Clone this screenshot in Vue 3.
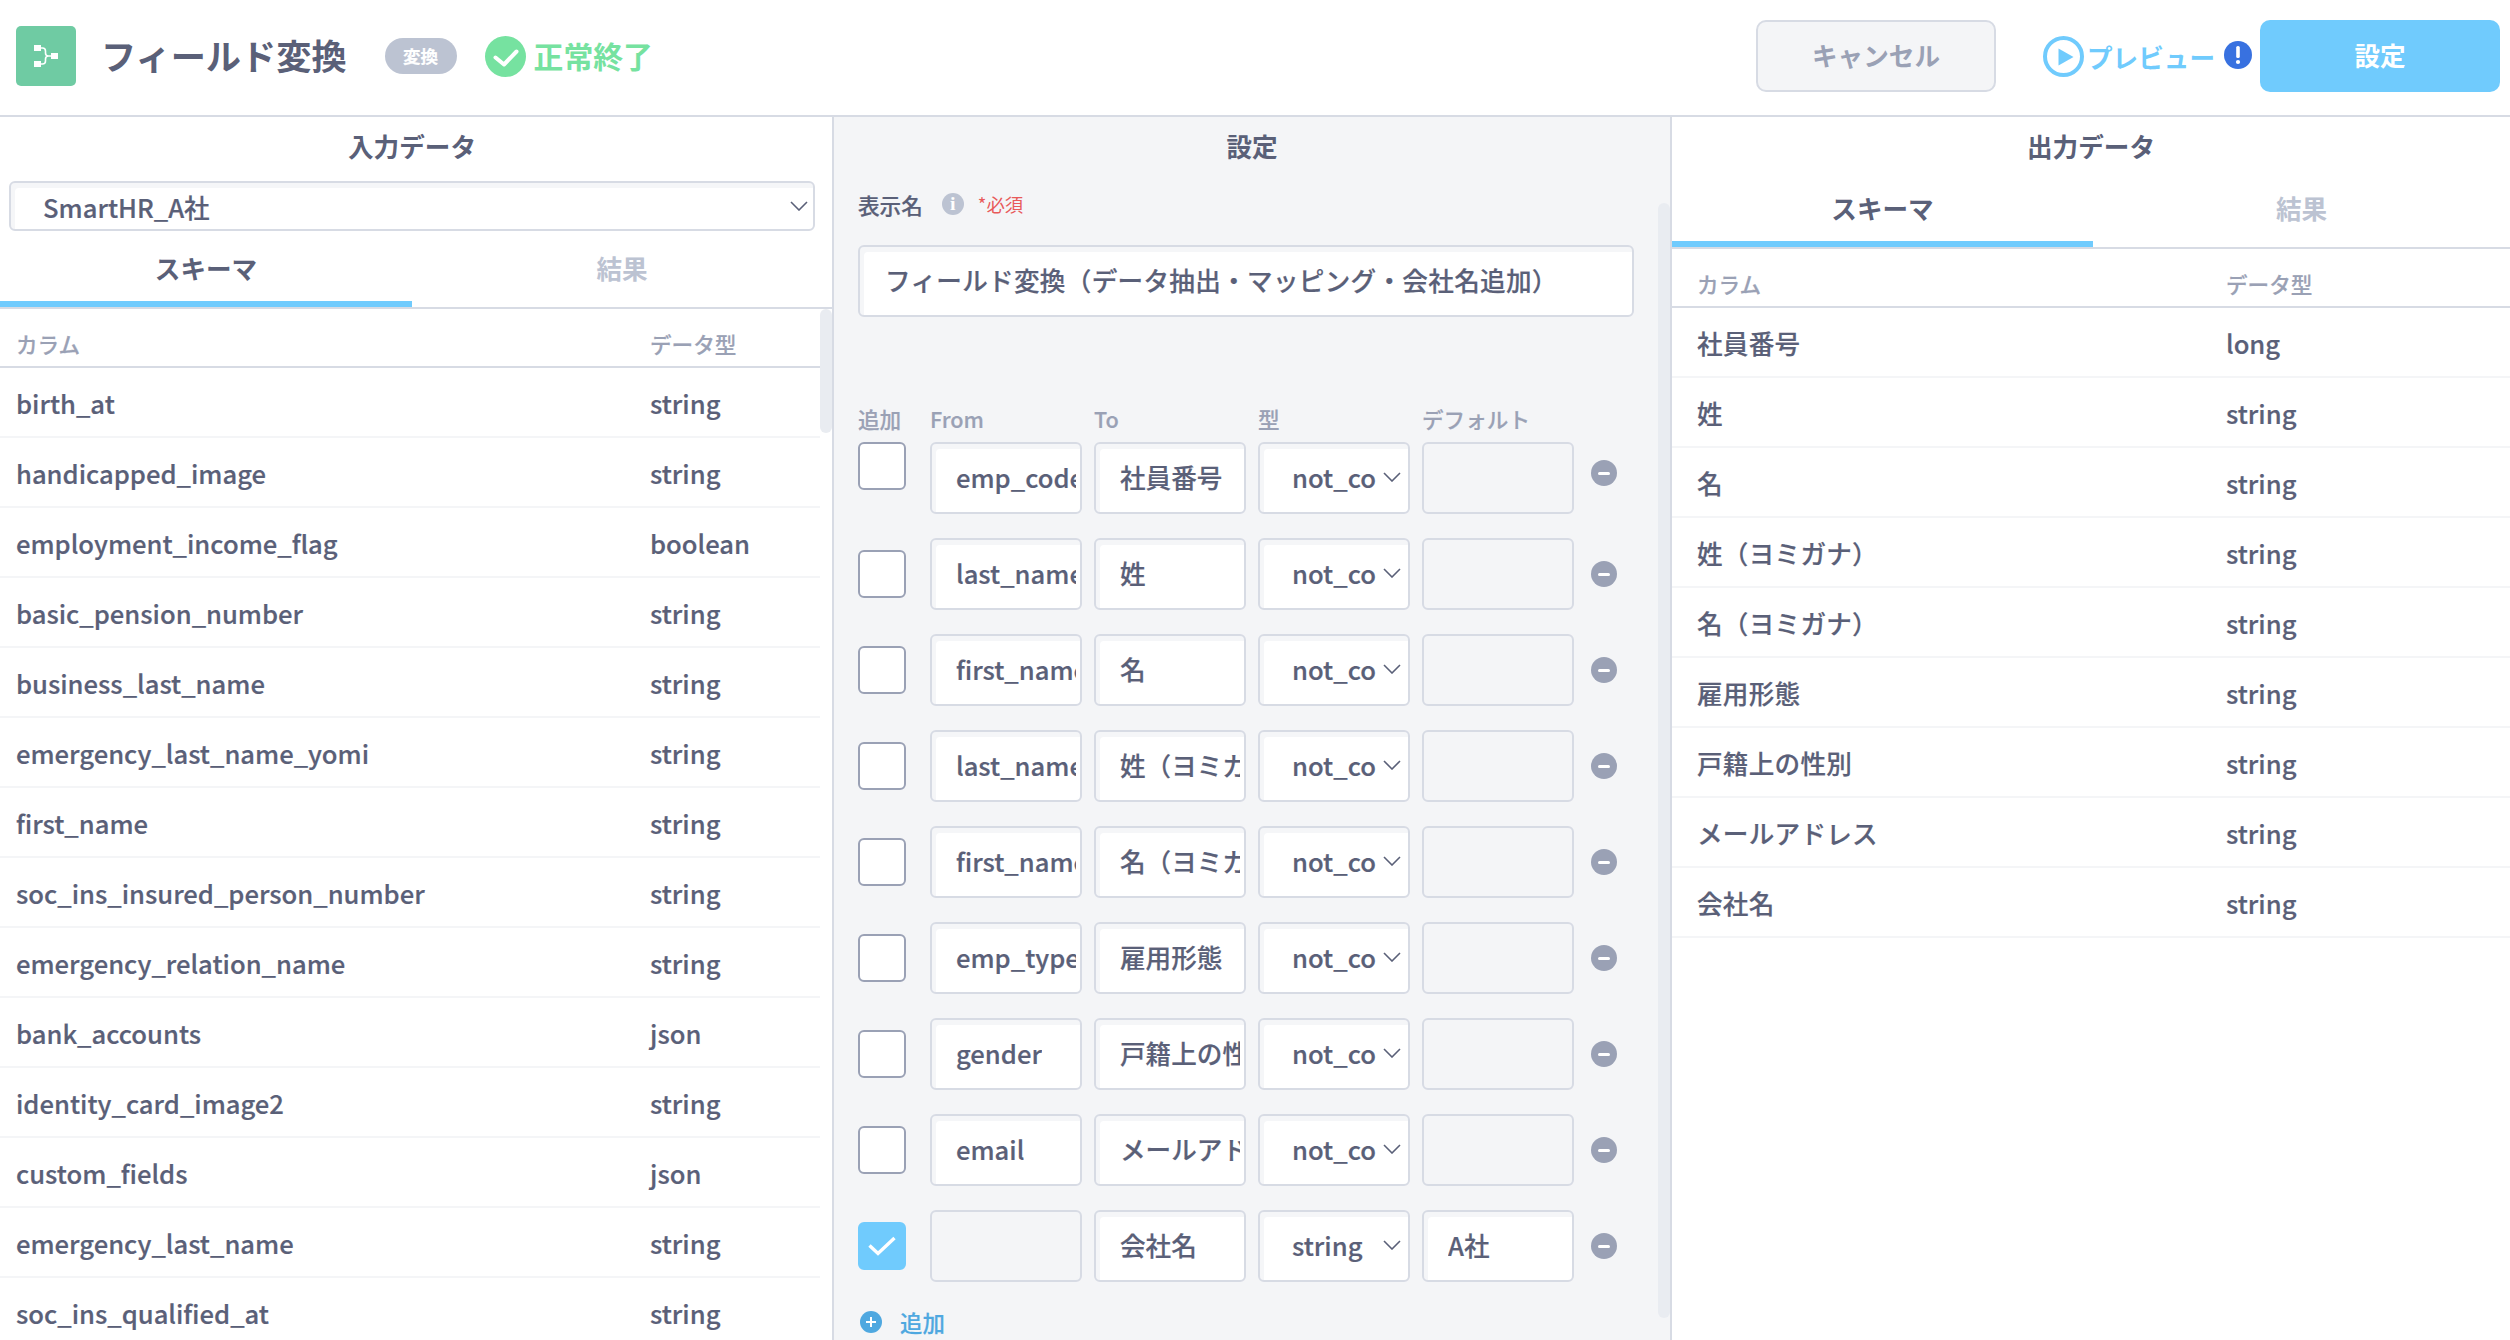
<script setup>
const leftRows = [
  ['birth_at', 'string'], ['handicapped_image', 'string'], ['employment_income_flag', 'boolean'],
  ['basic_pension_number', 'string'], ['business_last_name', 'string'], ['emergency_last_name_yomi', 'string'],
  ['first_name', 'string'], ['soc_ins_insured_person_number', 'string'], ['emergency_relation_name', 'string'],
  ['bank_accounts', 'json'], ['identity_card_image2', 'string'], ['custom_fields', 'json'],
  ['emergency_last_name', 'string'], ['soc_ins_qualified_at', 'string']
]
const rightRows = [
  ['社員番号', 'long'], ['姓', 'string'], ['名', 'string'], ['姓（ヨミガナ）', 'string'], ['名（ヨミガナ）', 'string'],
  ['雇用形態', 'string'], ['戸籍上の性別', 'string'], ['メールアドレス', 'string'], ['会社名', 'string']
]
const mappings = [
  { from: 'emp_code', to: '社員番号', type: 'not_co' },
  { from: 'last_name', to: '姓', type: 'not_co' },
  { from: 'first_name', to: '名', type: 'not_co' },
  { from: 'last_name_yomi', to: '姓（ヨミガナ）', type: 'not_co' },
  { from: 'first_name_yomi', to: '名（ヨミガナ）', type: 'not_co' },
  { from: 'emp_type', to: '雇用形態', type: 'not_co' },
  { from: 'gender', to: '戸籍上の性別', type: 'not_co' },
  { from: 'email', to: 'メールアドレス', type: 'not_co' },
  { from: '', to: '会社名', type: 'string', def: 'A社', checked: true }
]
</script>

<template>
  <div class="page">
    <header class="top">
      <div class="logo">
        <svg width="60" height="60" viewBox="0 0 60 60">
          <rect x="18" y="19" width="7" height="6" fill="#fff" />
          <rect x="18" y="35" width="7" height="6" fill="#fff" />
          <rect x="35" y="27" width="7" height="6" fill="#fff" />
          <path d="M25 22h1.5q3 0 3 3v2q0 3 3 3H35M25 38h1.5q3 0 3-3v-2q0-3 3-3" fill="none" stroke="#fff" stroke-width="1.6" />
        </svg>
      </div>
      <h1 class="title">フィールド変換</h1>
      <span class="badge">変換</span>
      <svg class="status-icon" width="41" height="41" viewBox="0 0 41 41">
        <circle cx="20.5" cy="20.5" r="20.5" fill="#76e2a0" />
        <path d="M10.5 21.5l8.5 7 12.5-13" fill="none" stroke="#fff" stroke-width="4" stroke-linecap="round" stroke-linejoin="round" />
      </svg>
      <span class="status-text">正常終了</span>
      <div class="spacer"></div>
      <button class="btn cancel">キャンセル</button>
      <svg class="play" width="41" height="41" viewBox="0 0 41 41">
        <circle cx="20.5" cy="20.5" r="18.5" fill="none" stroke="#70cbfd" stroke-width="4" />
        <path d="M15.5 12.5l15 8.5-15 8.5z" fill="#70cbfd" />
      </svg>
      <span class="preview">プレビュー</span>
      <svg class="alert" width="28" height="28" viewBox="0 0 28 28">
        <circle cx="14" cy="14" r="14" fill="#3871e0" />
        <rect x="12.2" y="5" width="3.6" height="12" rx="1.6" fill="#fff" />
        <circle cx="14" cy="21" r="2.1" fill="#fff" />
      </svg>
      <button class="btn primary">設定</button>
    </header>

    <main class="columns">
      <section class="panel left">
        <div class="panel-title left-title">入力データ</div>
        <div class="select-wrap">
          <div class="select-box">
            <span>SmartHR_A社</span>
            <svg class="chev big" viewBox="0 0 18 10"><path d="M1 1l8 8 8-8" /></svg>
          </div>
        </div>
        <div class="tabs left-tabs">
          <div class="tab active">スキーマ</div>
          <div class="tab">結果</div>
        </div>
        <div class="table narrow">
          <div class="thead"><span class="c1">カラム</span><span class="c2 left-c2">データ型</span></div>
          <div v-for="r in leftRows" :key="r[0]" class="tr"><span class="c1">{{ r[0] }}</span><span class="c2 left-c2">{{ r[1] }}</span></div>
        </div>
        <div class="scroll left-scroll"></div>
      </section>

      <section class="panel middle">
        <div class="panel-title">設定</div>
        <div class="label-row">
          <span class="label">表示名</span>
          <span class="info">i</span>
          <span class="req">*必須</span>
        </div>
        <div class="name-input field"><span class="field-text">フィールド変換（データ抽出・マッピング・会社名追加）</span></div>

        <div class="map-head">
          <span class="h-add">追加</span>
          <span class="h-col">From</span>
          <span class="h-col">To</span>
          <span class="h-col">型</span>
          <span class="h-col">デフォルト</span>
        </div>
        <div v-for="(m, i) in mappings" :key="i" class="map-row" :class="{ first: i === 0 }">
          <span class="check" :class="{ on: m.checked }">
            <svg v-if="m.checked" width="28" height="20" viewBox="0 0 28 20"><path d="M1.5 9.5L10 17.5 26.5 2" fill="none" stroke="#fff" stroke-width="3.4" /></svg>
          </span>
          <div class="field cell" :class="{ empty: !m.from }"><span class="field-text">{{ m.from }}</span></div>
          <div class="field cell"><span class="field-text">{{ m.to }}</span></div>
          <div class="field cell type">
            <span>{{ m.type }}</span>
            <svg class="chev" viewBox="0 0 18 10"><path d="M1 1l8 8 8-8" /></svg>
          </div>
          <div class="field cell" :class="{ empty: !m.def }"><span class="field-text">{{ m.def }}</span></div>
          <span class="minus"></span>
        </div>
        <div class="add">
          <span class="plus"></span>
          <span>追加</span>
        </div>
        <div class="scroll mid-scroll"></div>
      </section>

      <section class="panel right">
        <div class="panel-title">出力データ</div>
        <div class="tabs right-tabs">
          <div class="tab active">スキーマ</div>
          <div class="tab">結果</div>
        </div>
        <div class="table">
          <div class="thead rhead"><span class="c1 rc1">カラム</span><span class="c2">データ型</span></div>
          <div v-for="r in rightRows" :key="r[0]" class="tr"><span class="c1 rc1 wide">{{ r[0] }}</span><span class="c2">{{ r[1] }}</span></div>
        </div>
      </section>
    </main>
  </div>
</template>

<style>
html, body { margin: 0; background: #fff; }
</style>

<style scoped>
.page {
  width: 2510px;
  height: 1340px;
  overflow: hidden;
  font-family: "Noto Sans CJK JP", "Noto Sans", sans-serif;
  color: #5a6078;
  font-size: 25.6px;
  font-weight: 500;
  -webkit-text-stroke: 0.2px currentColor;
  background: #fff;
}
.top {
  height: 112px;
  padding: 0 10px 3px 16px;
  display: flex;
  align-items: center;
  border-bottom: 2px solid #d7dbe4;
}
.logo {
  width: 60px;
  height: 60px;
  background: #6fcba3;
  border-radius: 5px;
  flex: none;
}
.logo svg { display: block; }
.title {
  margin: 0 0 2px 25px;
  font-size: 35.2px;
  font-weight: 700;
  -webkit-text-stroke: 0;
  color: #5a6078;
  line-height: 1.2;
}
.badge {
  margin-left: 38px;
  width: 72px;
  height: 36px;
  line-height: 36px;
  text-align: center;
  border-radius: 18px;
  background: #bcc3d2;
  color: #fff;
  font-size: 17.6px;
  font-weight: 700;
}
.status-icon { margin-left: 28px; flex: none; }
.status-text {
  margin: 0 0 2px 8px;
  font-size: 29.8px;
  font-weight: 700;
  -webkit-text-stroke: 0;
  color: #76e2a0;
}
.spacer { flex: 1; }
.btn {
  height: 72px;
  font: inherit;
  font-weight: 700;
  -webkit-text-stroke: 0;
  border-radius: 10px;
  padding: 0 0 3px;
  text-align: center;
}
.cancel {
  width: 240px;
  background: #f4f5f7;
  border: 2px solid #d7dbe4;
  color: #9aa1b5;
}
.play { margin-left: 47px; flex: none; }
.preview {
  margin-left: 3px;
  color: #70cbfd;
  font-weight: 700;
  -webkit-text-stroke: 0;
}
.alert { margin-left: 9px; margin-bottom: 3px; flex: none; }
.primary {
  width: 240px;
  margin-left: 8px;
  background: #70cbfd;
  border: none;
  color: #fff;
}
.columns {
  display: flex;
  height: 1223px;
}
.panel { position: relative; flex: none; }
.left { width: 832px; }
.middle {
  width: 840px;
  box-sizing: border-box;
  background: #f4f5f7;
  border-left: 2px solid #d7dbe4;
  border-right: 2px solid #d7dbe4;
  padding: 0 0 0 24px;
}
.right { width: 838px; }
.panel-title {
  height: 56px;
  line-height: 58px;
  text-align: center;
  color: #5a6078;
  font-weight: 700;
  -webkit-text-stroke: 0;
}
.left-title { width: 824px; }
.middle .panel-title { margin-left: -24px; }
.select-wrap { padding: 8px 17px 0 9px; }
.select-box {
  height: 50px;
  box-sizing: border-box;
  border: 2px solid #d7dbe4;
  border-radius: 6px;
  box-shadow: inset 4px 5px 0 #f5f6f8;
  background: #fff;
  padding: 0 5px 0 32px;
  display: flex;
  align-items: center;
  justify-content: space-between;
}
.chev {
  width: 18px;
  height: 10px;
  flex: none;
  fill: none;
  stroke: #5a6078;
  stroke-width: 1.6;
}
.big { width: 18px; height: 10px; }
.tabs {
  display: flex;
  height: 74px;
  border-bottom: 2px solid #d7dbe4;
}
.left-tabs { margin-top: 2px; }
.tab {
  box-sizing: border-box;
  padding-top: 16px;
  text-align: center;
  font-weight: 700;
  -webkit-text-stroke: 0;
  color: #bcc3d2;
  border-bottom: 6px solid transparent;
}
.tab.active {
  color: #5a6078;
  border-bottom-color: #70cbfd;
}
.left-tabs .tab { width: 420px; }
.left-tabs .tab.active { width: 412px; }
.right-tabs .tab { width: 417px; }
.right-tabs .tab.active { width: 421px; }
.narrow { width: 820px; }
.thead {
  height: 59px;
  box-sizing: border-box;
  padding-top: 12px;
  border-bottom: 2px solid #d7dbe4;
  display: flex;
  align-items: center;
  font-size: 21.6px;
  color: #9aa1b5;
}
.tr {
  height: 70px;
  box-sizing: border-box;
  border-bottom: 2px solid #f4f5f7;
  display: flex;
  align-items: center;
}
.c1 { width: 650px; padding-left: 16px; box-sizing: border-box; flex: none; }
.rc1 { width: 554px; padding-left: 25px; }
.wide { letter-spacing: 0.25px; }
.scroll {
  position: absolute;
  width: 12px;
  background: #e9ecf1;
  border-radius: 6px;
}
.left-scroll { right: 0; top: 192px; height: 124px; }
.mid-scroll { right: 0; top: 86px; height: 1115px; }
.label-row {
  display: flex;
  align-items: center;
  height: 62px;
}
.label { font-size: 21.6px; color: #5a6078; }
.info {
  margin-left: 19px;
  width: 22px;
  height: 22px;
  border-radius: 50%;
  background: #bcc3d2;
  color: #fff;
  font-family: "Liberation Serif", serif;
  font-weight: 700;
  font-size: 18px;
  line-height: 22px;
  text-align: center;
}
.req {
  margin-left: 14px;
  font-size: 18.4px;
  font-weight: 400;
  color: #e85a5a;
  -webkit-text-stroke: 0;
}
.field {
  box-sizing: border-box;
  height: 72px;
  border: 2px solid #d7dbe4;
  border-radius: 6px;
  background: #fff;
  box-shadow: inset 4px 5px 0 #f5f6f8;
  display: flex;
  align-items: center;
  padding: 0 4px 3px 24px;
  overflow: hidden;
}
.field-text {
  display: block;
  overflow: hidden;
  white-space: nowrap;
}
.name-input {
  width: 776px;
  margin-top: 10px;
  padding-left: 25px;
  letter-spacing: 0.3px;
}
.map-head {
  display: flex;
  margin-top: 87px;
  height: 38px;
  line-height: 30px;
  font-size: 21.6px;
  color: #9aa1b5;
}
.h-add { width: 72px; flex: none; }
.h-col { width: 164px; flex: none; }
.map-row {
  display: flex;
  align-items: center;
  height: 72px;
  margin-bottom: 24px;
}
.check {
  box-sizing: border-box;
  width: 48px;
  height: 48px;
  flex: none;
  margin-right: 24px;
  border: 2px solid #9aa1b5;
  border-radius: 6px;
  background: #fff;
  display: flex;
  align-items: center;
  justify-content: center;
}
.check.on {
  background: #70cbfd;
  border-color: #70cbfd;
}
.first .check { align-self: flex-start; }
.cell {
  width: 152px;
  flex: none;
  margin-right: 12px;
}
.empty {
  background: #f4f5f7;
  box-shadow: none;
}
.type {
  padding: 0 7px 3px 32px;
  justify-content: space-between;
}
.minus {
  position: relative;
  width: 26px;
  height: 26px;
  flex: none;
  margin-left: 5px;
  border-radius: 50%;
  background: #9aa1b5;
}
.minus::after {
  content: "";
  position: absolute;
  left: 7px;
  top: 11.5px;
  width: 12px;
  height: 3px;
  border-radius: 2px;
  background: #fff;
}
.first .minus { margin-bottom: 10px; }
.add {
  display: flex;
  align-items: center;
  margin-top: 3px;
  font-size: 22.4px;
  color: #4fa8e0;
}
.plus {
  position: relative;
  width: 22px;
  height: 22px;
  margin: 0 18px 0 2px;
  border-radius: 50%;
  background: #4fa8e0;
}
.plus::before, .plus::after {
  content: "";
  position: absolute;
  background: #fff;
}
.plus::before { left: 6px; top: 10px; width: 10px; height: 2px; }
.plus::after { left: 10px; top: 6px; width: 2px; height: 10px; }
</style>
